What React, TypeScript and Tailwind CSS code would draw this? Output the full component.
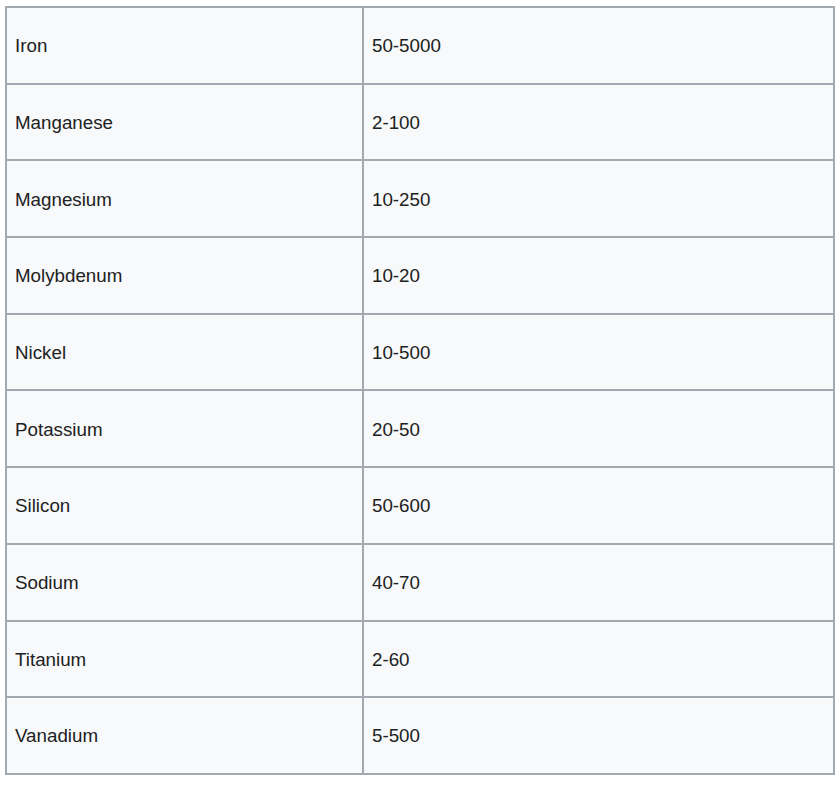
const rows: [string, string][] = [
  ["Iron", "50-5000"],
  ["Manganese", "2-100"],
  ["Magnesium", "10-250"],
  ["Molybdenum", "10-20"],
  ["Nickel", "10-500"],
  ["Potassium", "20-50"],
  ["Silicon", "50-600"],
  ["Sodium", "40-70"],
  ["Titanium", "2-60"],
  ["Vanadium", "5-500"],
];

export default function App() {
  return (
    <div className="min-h-[787px] bg-white pl-[5px] pt-[6px]" style={{ fontFamily: '"Liberation Sans", Arial, sans-serif' }}>
      <table className="w-[830px] border-collapse border-2 border-[#a2a9b1] bg-[#f8f9fa] text-[18.75px] text-[#202122]">
        <tbody>
          {rows.map(([name, value]) => (
            <tr key={name} className="h-[76.7px]">
              <td className="w-[357px] border-2 border-[#a2a9b1] pl-[8px] pr-[7px] pt-[2px] align-middle">{name}</td>
              <td className="border-2 border-[#a2a9b1] pl-[8px] pr-[7px] pt-[2px] align-middle">{value}</td>
            </tr>
          ))}
        </tbody>
      </table>
    </div>
  );
}
